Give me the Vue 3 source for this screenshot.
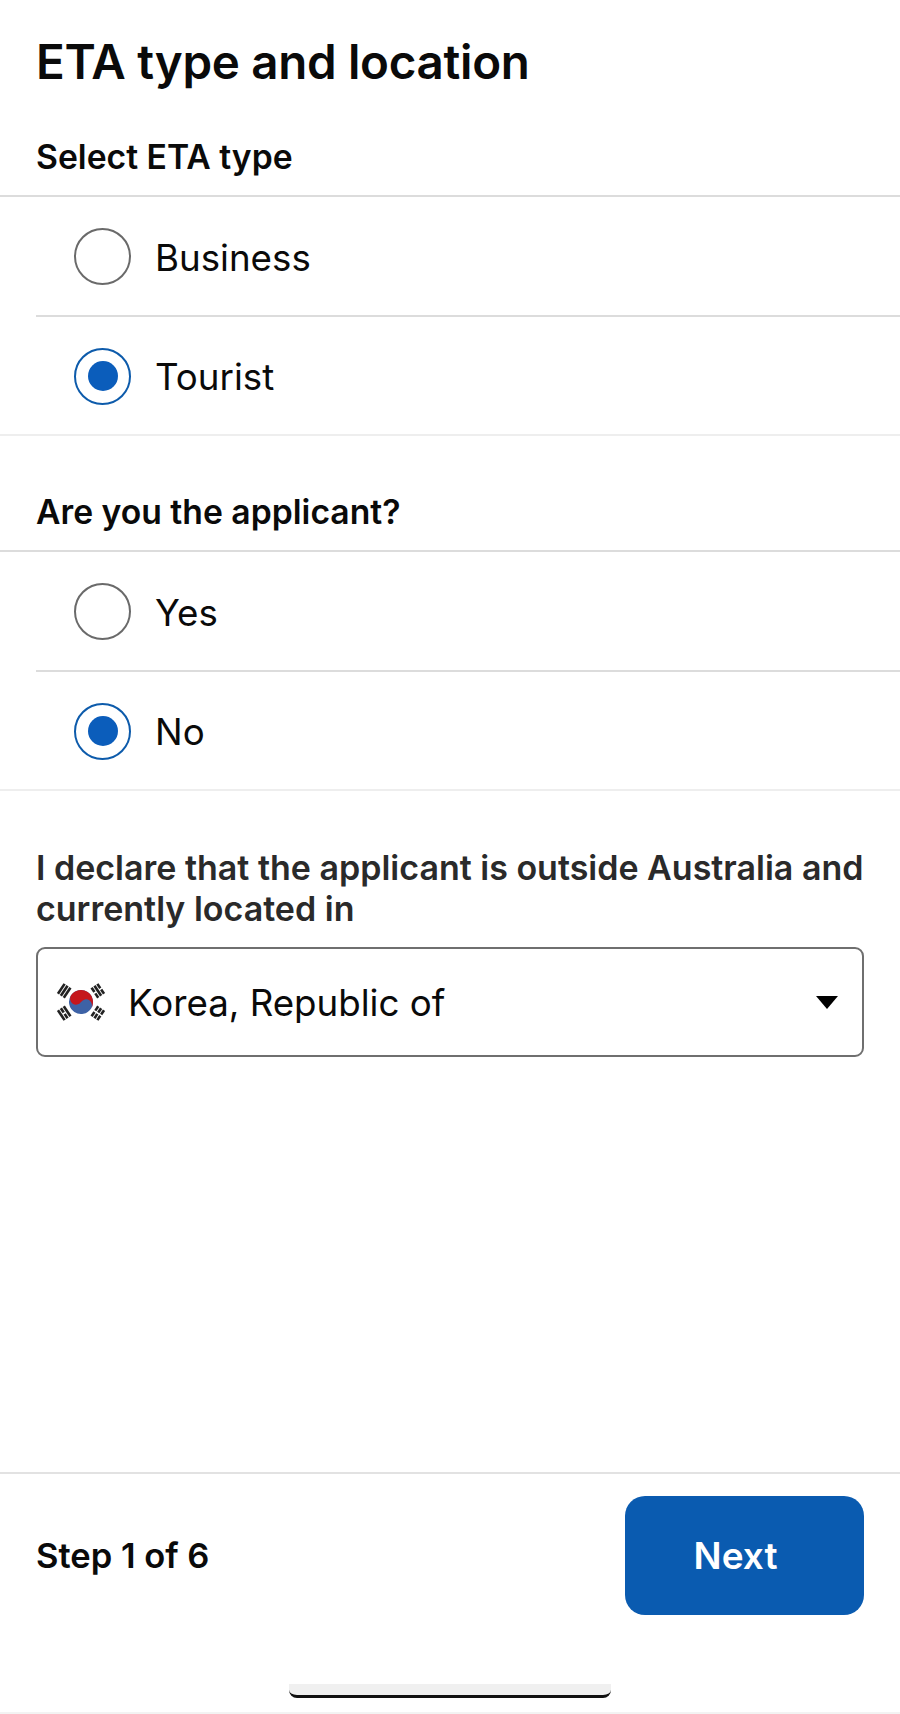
<script setup>
const groups = [
  { label: 'Select ETA type', options: [{ text: 'Business', on: false }, { text: 'Tourist', on: true }] },
  { label: 'Are you the applicant?', options: [{ text: 'Yes', on: false }, { text: 'No', on: true }] }
]
// Each flag trigram: rotation round the flag centre, and whether its three bars are solid or broken.
const trigrams = [
  { angle: -56.3, bars: [true, true, true] },
  { angle: 56.3, bars: [false, true, false] },
  { angle: -123.7, bars: [true, false, true] },
  { angle: 123.7, bars: [false, false, false] }
]
const barY = [-25, -21.5, -18]
</script>

<template>
  <main class="page">
    <h1 class="title">ETA type and location</h1>
    <section v-for="g in groups" :key="g.label" class="group">
      <h2 class="label">{{ g.label }}</h2>
      <div v-for="o in g.options" :key="o.text" class="row">
        <span class="radio" :class="{ on: o.on }"></span>
        <span class="opt">{{ o.text }}</span>
      </div>
    </section>
    <p class="declare">I declare that the applicant is outside Australia and currently located in</p>
    <div class="select">
      <svg class="flag" viewBox="-25 -20 50 40" width="50" height="40">
        <g transform="rotate(33.7)">
          <circle r="12" fill="#3d62a6"/>
          <path d="M-12 0A12 12 0 0 1 12 0A6 6 0 0 0 0 0A6 6 0 0 1-12 0Z" fill="#c5161d"/>
        </g>
        <g fill="#222">
          <g v-for="t in trigrams" :key="t.angle" :transform="`rotate(${t.angle})`">
            <template v-for="(solid, i) in t.bars" :key="i">
              <rect v-if="solid" x="-6" :y="barY[i]" width="12" height="2.600"/>
              <template v-else>
                <rect x="-6" :y="barY[i]" width="5.200" height="2.600"/>
                <rect x=".8" :y="barY[i]" width="5.200" height="2.600"/>
              </template>
            </template>
          </g>
        </g>
      </svg>
      <span class="country">Korea, Republic of</span>
      <span class="caret"></span>
    </div>
    <div class="spacer"></div>
    <footer class="footer">
      <span class="step">Step 1 of 6</span>
      <button class="next" type="button">Next</button>
    </footer>
    <div class="home"><span class="bar"></span></div>
    <div class="strip"></div>
  </main>
</template>

<style>
html, body { margin: 0; background: #fff; }
</style>

<style scoped>
.page {
  height: 1714px;
  display: flex;
  flex-direction: column;
  font-family: Inter, "Liberation Sans", sans-serif;
  color: #0a0a0a;
  background: #fff;
  overflow: hidden;
}
.title {
  margin: 0;
  padding: 34px 36px 0;
  font-size: 47.500px;
  line-height: 56px;
  font-weight: 600;
  letter-spacing: -0.3px;
}
.group { display: flex; flex-direction: column; }
.label {
  margin: 0;
  padding: 45px 36px 0;
  height: 107px;
  box-sizing: border-box;
  font-size: 33.700px;
  line-height: 44px;
  font-weight: 600;
  border-bottom: 2px solid #dcdcdc;
}
.group + .group .label { height: 116px; padding-top: 54px; }
.row {
  display: flex;
  align-items: center;
  gap: 24px;
  height: 115.500px;
  margin-left: 36px;
  padding: 2px 0 0 38px;
  border-bottom: 2px solid #dcdcdc;
}
.row:last-child { margin-left: 0; padding-left: 74px; border-bottom-color: #eeeeee; }
.radio {
  width: 57px;
  height: 57px;
  box-sizing: border-box;
  border: 2.500px solid #6a6a6a;
  border-radius: 50%;
  background: #fff;
  display: flex;
  align-items: center;
  justify-content: center;
  flex: none;
}
.radio.on { border-color: #0d5bab; }
.radio.on::after {
  content: "";
  width: 30px;
  height: 30px;
  border-radius: 50%;
  background: #0b5dbb;
}
.opt { font-size: 36.700px; line-height: 44px; padding-top: 2px; font-weight: 400; }
.declare {
  margin: 0;
  padding: 56px 36px 0;
  font-size: 34px;
  line-height: 41px;
  font-weight: 600;
  color: #2a2a2a;
}
.select {
  margin: 18px 36px 0;
  height: 110px;
  box-sizing: border-box;
  border: 2.500px solid #6f6f6f;
  border-radius: 9px;
  display: flex;
  align-items: center;
  padding-left: 18px;
  padding-right: 24px;
}
.flag { flex: none; }
.country { margin-left: 22px; font-size: 36.700px; line-height: 44px; padding-top: 2px; flex: 1; }
.caret {
  width: 0;
  height: 0;
  margin-top: 1px;
  border-left: 11px solid transparent;
  border-right: 11px solid transparent;
  border-top: 13px solid #000;
}
.spacer { flex: 1; }
.footer {
  height: 191px;
  box-sizing: border-box;
  border-top: 2px solid #e2e2e2;
  display: flex;
  align-items: flex-start;
  justify-content: space-between;
  padding: 22px 36px 0;
}
.step { font-size: 34.500px; line-height: 119px; font-weight: 600; }
.next {
  width: 239px;
  height: 119px;
  border: 0;
  border-radius: 20px;
  padding: 0 18px 0 0;
  background: #0a5bb0;
  color: #fff;
  font: 600 37px/44px Inter, "Liberation Sans", sans-serif;
}
.home { height: 49px; display: flex; justify-content: center; box-sizing: border-box; padding-top: 21px; }
.bar {
  width: 322px;
  height: 14px;
  box-sizing: border-box;
  background: #f0f0f0;
  border-bottom: 3px solid #111;
  border-radius: 0 0 8px 8px;
}
.strip { height: 2px; background: #f3f3f3; }
</style>
